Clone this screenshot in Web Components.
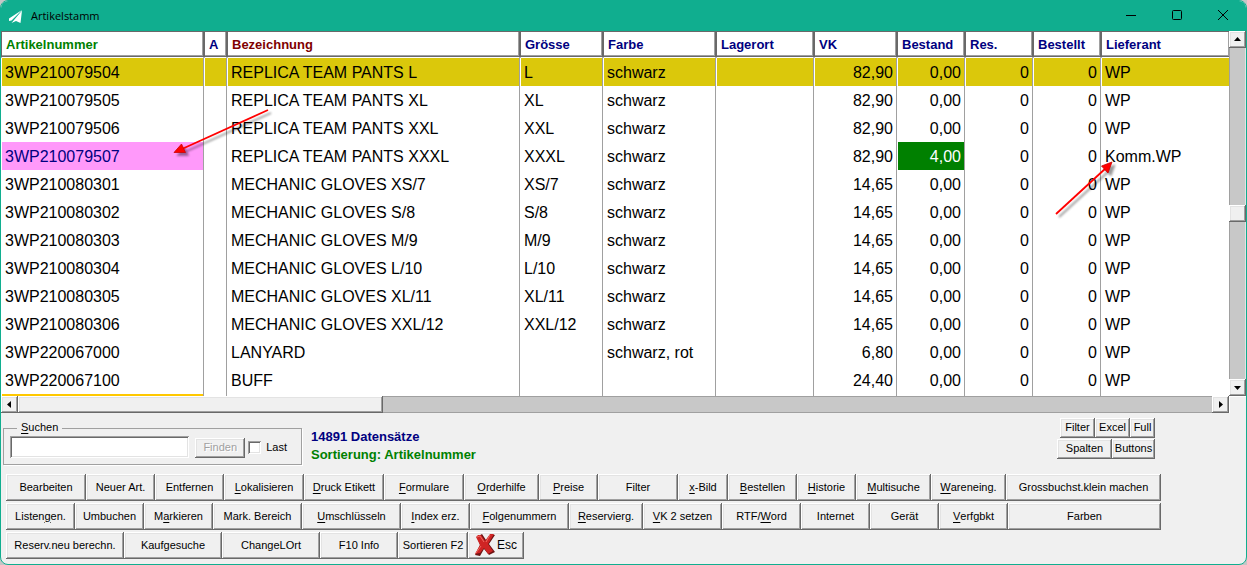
<!DOCTYPE html>
<html lang="de">
<head>
<meta charset="utf-8">
<meta name="viewport" content="width=device-width, initial-scale=1">
<title>Artikelstamm</title>
<style>
  html, body { margin: 0; background: #c4c6c6; }
  body {
    --accent: #10ae8f;
    --face: #f0f0f0;
    --dark: #696969;
    --mid: #a0a0a0;
    --bevel: inset -1px -1px #696969, inset 1px 1px #fff, inset -2px -2px #a0a0a0, inset 2px 2px #e3e3e3;
    font: 11px/14px "Liberation Sans", Arial, sans-serif;
    color: #000;
  }
  .cross { display: block; flex: none; margin-right: 2px; }
  .esc span { font-size: 12px; }
</style>
</head>
<body>
<app-window>
  <title-bar slot="title">Artikelstamm</title-bar>
  <article-grid></article-grid>
  <command-panel>
    <search-box slot="search"></search-box>
    <record-info slot="info"></record-info>
    <button-row slot="views">
      <tool-button size="35">Filter</tool-button>
      <tool-button size="35">Excel</tool-button>
      <tool-button size="25">Full</tool-button>
    </button-row>
    <button-row slot="views">
      <tool-button size="55">Spalten</tool-button>
      <tool-button size="43">Buttons</tool-button>
    </button-row>
    <button-row large>
      <tool-button size="80">Bearbeiten</tool-button>
      <tool-button size="69">Neuer Art.</tool-button>
      <tool-button size="69">Entfernen</tool-button>
      <tool-button size="80"><u>L</u>okalisieren</tool-button>
      <tool-button size="80"><u>D</u>ruck Etikett</tool-button>
      <tool-button size="80"><u>F</u>ormulare</tool-button>
      <tool-button size="75"><u>O</u>rderhilfe</tool-button>
      <tool-button size="59"><u>P</u>reise</tool-button>
      <tool-button size="80">Filter</tool-button>
      <tool-button size="50"><u>x</u>-Bild</tool-button>
      <tool-button size="69"><u>B</u>estellen</tool-button>
      <tool-button size="59"><u>H</u>istorie</tool-button>
      <tool-button size="75"><u>M</u>ultisuche</tool-button>
      <tool-button size="75"><u>W</u>areneing.</tool-button>
      <tool-button size="155">Grossbuchst.klein machen</tool-button>
    </button-row>
    <button-row large>
      <tool-button size="69">Listen<u>g</u>en.</tool-button>
      <tool-button size="69">Umbuchen</tool-button>
      <tool-button size="69">M<u>a</u>rkieren</tool-button>
      <tool-button size="89">Mark. Bereich</tool-button>
      <tool-button size="99"><u>U</u>mschlüsseln</tool-button>
      <tool-button size="69"><u>I</u>ndex erz.</tool-button>
      <tool-button size="99"><u>F</u>olgenummern</tool-button>
      <tool-button size="74"><u>R</u>eservierg.</tool-button>
      <tool-button size="79"><u>V</u>K 2 setzen</tool-button>
      <tool-button size="79">RTF/<u>W</u>ord</tool-button>
      <tool-button size="69">Internet</tool-button>
      <tool-button size="69">Gerät</tool-button>
      <tool-button size="69"><u>V</u>erfgbkt</tool-button>
      <tool-button size="153">Farben</tool-button>
    </button-row>
    <button-row large>
      <tool-button size="118">Reserv.neu berechn.</tool-button>
      <tool-button size="98">Kaufgesuche</tool-button>
      <tool-button size="98">ChangeLOrt</tool-button>
      <tool-button size="78">F10 Info</tool-button>
      <tool-button size="70">Sortieren F2</tool-button>
      <tool-button size="56" class="esc"><svg class="cross" width="20" height="24" viewBox="0 0 20 24" aria-hidden="true"><path d="M2,4 L7,1 L11,7 L16,1 L20,2 L14,11 L20,19 L14,22 L9,16 L5,23 L0,22 L5,12 Z" fill="#6d1414"/><path d="M1,4 L3,2 L6,2 L10,8 L15,1 L19,1 L13,11 L18,18 L13,21 L9,15 L5,20 L0,21 L5,12 Z" fill="#cf2424"/><path d="M2,4 L5,3 L9,9 M15,2 L11,9 M1,20 L6,13" fill="none" stroke="#ee6a62"/></svg><span>Esc</span></tool-button>
    </button-row>
  </command-panel>
</app-window>

<script>
class BaseElement extends HTMLElement {
  constructor() {
    super();
    this.attachShadow({ mode: 'open' }).innerHTML = this.constructor.markup;
  }
}

customElements.define('app-window', class extends BaseElement {
  static markup = `
    <style>
      :host { display: flex; flex-direction: column; box-sizing: border-box; min-height: 100vh;
        border: 1px solid var(--accent); border-radius: 8px; overflow: hidden; background: var(--face); }
    </style>
    <slot name="title"></slot>
    <slot></slot>`;
});

customElements.define('title-bar', class extends BaseElement {
  static markup = `
    <style>
      :host { display: flex; align-items: center; height: 30px; background: var(--accent); }
      .logo { width: 16px; height: 16px; margin: 0 8px 0 6px; }
      h1 { flex: 1; margin: 0; font: 11px/16px "Open Sans", "Noto Sans", sans-serif; }
      button { display: grid; place-items: center; width: 46px; height: 30px; margin: 0; padding: 0; border: 0; background: none; }
      button svg { width: 12px; height: 12px; fill: none; stroke: #000; }
    </style>
    <svg class="logo" viewBox="0 0 16 16" aria-hidden="true">
      <path d="M15 2 2 10.500v2.500l2.500-.500z M15 2.500 13.500 15 9 13l-4.500 2z" fill="#fff"/>
    </svg>
    <h1><slot></slot></h1>
    <button type="button" aria-label="Minimieren"><svg viewBox="0 0 12 12"><path d="M1 5.500h10"/></svg></button>
    <button type="button" aria-label="Maximieren"><svg viewBox="0 0 12 12"><rect x="1.500" y="0.500" width="9" height="9" rx="1"/></svg></button>
    <button type="button" aria-label="Schliessen"><svg viewBox="0 0 12 12"><path d="M1 0l10 10M11 0L1 10"/></svg></button>`;
});

customElements.define('scroll-bar', class extends BaseElement {
  static markup = `
    <style>
      :host { display: flex; min-width: 0; min-height: 0; background: #c8c8c8; }
      :host([vertical]) { flex-direction: column; box-shadow: inset 1px 0 var(--mid), inset -1px 0 #e3e3e3; }
      :host(:not([vertical])) { box-shadow: inset 0 1px var(--mid), inset 0 -1px var(--mid); }
      button { flex: none; display: grid; place-items: center; width: 17px; height: 17px; margin: 0; padding: 0; border: 0;
        background: var(--face); box-shadow: var(--bevel); }
      svg { width: 7px; height: 7px; }
      :host([vertical]) svg { transform: rotate(90deg); }
      .thumb { flex: none; width: 365px; height: 17px; background: var(--face); box-shadow: var(--bevel); }
      :host([vertical]) .thumb { width: 17px; }
      .before { flex: 0; }
      :host([vertical]) .before { flex: 1; }
      .after { flex: 1; }
    </style>
    <button type="button" aria-label="Zurück"><svg viewBox="0 0 7 7"><path d="M5 0v7L1 3.500z"/></svg></button>
    <div class="before"></div><div class="thumb"></div><div class="after"></div>
    <button type="button" aria-label="Weiter"><svg viewBox="0 0 7 7"><path d="M2 0v7l4-3.500z"/></svg></button>`;
});

customElements.define('pointer-arrows', class extends BaseElement {
  static markup = `
    <style>
      :host { position: absolute; top: 0; left: 0; pointer-events: none; }
      svg { display: block; width: 1140px; height: 200px; }
      .a { filter: drop-shadow(3px 3px 1px rgba(0,0,0,.4)); }
      line { stroke: #f00; stroke-width: 1.800; }
      path { fill: #f00; stroke: #c00; stroke-width: .8; }
    </style>
    <svg viewBox="0 0 1140 200" aria-hidden="true">
      <g class="a"><line x1="267" y1="79" x2="181" y2="118"/><path d="M173 121.500 180.500 113 184.500 121.500z"/></g>
      <g class="a"><line x1="1055" y1="183" x2="1105" y2="137"/><path d="M1111 131 1107 142 1100.500 135z"/></g>
    </svg>`;
});

const COLUMNS = [
  ['Artikelnummer', 203, 'green'], ['A', 23], ['Bezeichnung', 293, 'maroon'], ['Grösse', 83],
  ['Farbe', 113], ['Lagerort', 98], ['VK', 83], ['Bestand', 68], ['Res.', 68], ['Bestellt', 68], ['Lieferant', 0]
];
const ARTICLES = [
  ['3WP210079504', 'REPLICA TEAM PANTS L', 'L', 'schwarz', '82,90', '0,00', 'WP'],
  ['3WP210079505', 'REPLICA TEAM PANTS XL', 'XL', 'schwarz', '82,90', '0,00', 'WP'],
  ['3WP210079506', 'REPLICA TEAM PANTS XXL', 'XXL', 'schwarz', '82,90', '0,00', 'WP'],
  ['3WP210079507', 'REPLICA TEAM PANTS XXXL', 'XXXL', 'schwarz', '82,90', '4,00', 'Komm.WP'],
  ['3WP210080301', 'MECHANIC GLOVES XS/7', 'XS/7', 'schwarz', '14,65', '0,00', 'WP'],
  ['3WP210080302', 'MECHANIC GLOVES S/8', 'S/8', 'schwarz', '14,65', '0,00', 'WP'],
  ['3WP210080303', 'MECHANIC GLOVES M/9', 'M/9', 'schwarz', '14,65', '0,00', 'WP'],
  ['3WP210080304', 'MECHANIC GLOVES L/10', 'L/10', 'schwarz', '14,65', '0,00', 'WP'],
  ['3WP210080305', 'MECHANIC GLOVES XL/11', 'XL/11', 'schwarz', '14,65', '0,00', 'WP'],
  ['3WP210080306', 'MECHANIC GLOVES XXL/12', 'XXL/12', 'schwarz', '14,65', '0,00', 'WP'],
  ['3WP220067000', 'LANYARD', '', 'schwarz, rot', '6,80', '0,00', 'WP'],
  ['3WP220067100', 'BUFF', '', '', '24,40', '0,00', 'WP']
];

customElements.define('article-grid', class extends BaseElement {
  static markup = `
    <style>
      :host { position: relative; display: grid; grid-template-columns: minmax(0, 1fr) 17px; grid-template-rows: auto 17px; }
      .view { overflow: hidden; background: #fff; }
      table { width: 100%; table-layout: fixed; border-collapse: separate; border-spacing: 0; }
      th, td { box-sizing: border-box; text-align: left; white-space: nowrap; overflow: hidden; }
      th { height: 27px; padding: 0 4px; font-size: 13px; line-height: 16px; color: #000080; background: #fff;
        border: 1px solid var(--dark); border-bottom-color: #fff;
        box-shadow: inset 0 -1px var(--dark), inset -1px -2px var(--mid); }
      th:last-child { border-right: 0; }
      th.green { color: #008000; }
      th.maroon { color: #800000; }
      td { height: 28px; padding: 2px 3px 0; font-size: 16px; line-height: 20px;
        border-left: 1px solid #fff; border-right: 1px solid var(--mid); }
      td:last-child { border-right: 0; }
      td.num { text-align: right; }
      tr.current td { background: #dbc80b; background-clip: padding-box; }
      td.marked { background: #ff99fa; background-clip: padding-box; color: #000080; }
      td.stock { background: #008000; background-clip: padding-box; color: #fff; }
      tr.next td { height: 2px; padding: 0; line-height: 0; }
      tr.next td:first-child { background: #ffc800; background-clip: padding-box; }
      .corner { background: var(--face); box-shadow: inset 1px 1px #fff; }
    </style>
    <div class="view"><table><colgroup></colgroup><thead><tr></tr></thead><tbody></tbody></table></div>
    <scroll-bar vertical></scroll-bar>
    <scroll-bar></scroll-bar>
    <div class="corner"></div>
    <pointer-arrows></pointer-arrows>`;

  connectedCallback() {
    const find = (s) => this.shadowRoot.querySelector(s);
    find('colgroup').innerHTML = COLUMNS.map(([, w]) => w ? `<col style="width:${w}px">` : '<col>').join('');
    find('thead tr').innerHTML = COLUMNS.map(([t, , c = '']) => `<th scope="col" class="${c}">${t}</th>`).join('');
    find('tbody').innerHTML = ARTICLES.map(([nr, name, size, colour, price, stock, supplier], i) => `
      <tr class="${i === 0 ? 'current' : ''}">
        <td class="${supplier !== 'WP' ? 'marked' : ''}">${nr}</td><td></td><td>${name}</td><td>${size}</td>
        <td>${colour}</td><td></td><td class="num">${price}</td>
        <td class="num ${stock !== '0,00' ? 'stock' : ''}">${stock}</td>
        <td class="num">0</td><td class="num">0</td><td>${supplier}</td>
      </tr>`).join('') + `<tr class="next" aria-hidden="true">${'<td></td>'.repeat(COLUMNS.length)}</tr>`;
  }
});

customElements.define('command-panel', class extends BaseElement {
  static markup = `
    <style>
      :host { display: block; padding: 5px 5px; }
      .top { display: flex; align-items: flex-start; margin: 0 86px 9px -3px; }
      .views { display: flex; flex-direction: column; align-items: flex-end; gap: 1px; margin-left: auto; }
      .rows { display: flex; flex-direction: column; gap: 2px; }
    </style>
    <div class="top">
      <slot name="search"></slot>
      <slot name="info"></slot>
      <div class="views"><slot name="views"></slot></div>
    </div>
    <div class="rows"><slot></slot></div>`;
});

customElements.define('button-row', class extends BaseElement {
  static markup = `
    <style>
      :host { display: flex; flex-wrap: wrap; --button-height: 20px; }
      :host([large]) { --button-height: 27px; }
    </style>
    <slot></slot>`;
});

customElements.define('tool-button', class extends BaseElement {
  static markup = `
    <style>
      :host { display: block; }
      button { box-sizing: border-box; display: flex; align-items: center; justify-content: center;
        width: 100%; height: var(--button-height, 20px); margin: 0; padding: 0 0 2px; border: 0;
        background: var(--face); box-shadow: var(--bevel); font: inherit; color: inherit; white-space: pre; }
      button:disabled { color: var(--mid); text-shadow: 1px 1px #fff; }
      ::slotted(u) { text-underline-offset: 2px; }
    </style>
    <button type="button"><slot></slot></button>`;
  connectedCallback() {
    this.style.width = this.getAttribute('size') + 'px';
    this.shadowRoot.querySelector('button').disabled = this.hasAttribute('disabled');
  }
});

customElements.define('search-box', class extends BaseElement {
  static markup = `
    <style>
      :host { display: block; flex: none; width: 299px; margin-top: 3px; }
      fieldset { box-sizing: border-box; min-width: 0; margin: 0; padding: 1px 6px 6px; border: 1px solid var(--mid); box-shadow: 1px 1px #fff; }
      legend { height: 14px; margin-left: 7px; padding: 0 4px; background: var(--face); line-height: 12px; }
      u { text-underline-offset: 2px; }
      .line { display: flex; align-items: center; height: 22px; }
      input { box-sizing: border-box; margin: 0; border: 0; border-radius: 0; background: #fff; appearance: none;
        box-shadow: inset 1px 1px var(--mid), inset -1px -1px #fff, inset 2px 2px var(--dark), inset -2px -2px #e3e3e3; }
      input[type=text] { flex: 1; min-width: 0; height: 22px; padding: 0 4px; font: inherit; }
      tool-button { margin: 1px 3px 0 6px; }
      input[type=checkbox] { width: 13px; height: 13px; }
      label { margin: 0 8px 0 5px; }
    </style>
    <fieldset>
      <legend><u>S</u>uchen</legend>
      <div class="line">
        <input type="text" aria-label="Suchen">
        <tool-button size="50" disabled>Finden</tool-button>
        <input type="checkbox" id="last"><label for="last">Last</label>
      </div>
    </fieldset>`;
});

customElements.define('record-info', class extends BaseElement {
  static markup = `
    <style>
      :host { display: block; margin: 10px 0 0 9px; font-size: 13px; line-height: 18px; font-weight: bold; white-space: nowrap; }
      p { margin: 0; color: #000080; }
      .sort { color: #008000; }
    </style>
    <p>14891 Datensätze</p>
    <p class="sort">Sortierung: Artikelnummer</p>`;
});
</script>
</body>
</html>
